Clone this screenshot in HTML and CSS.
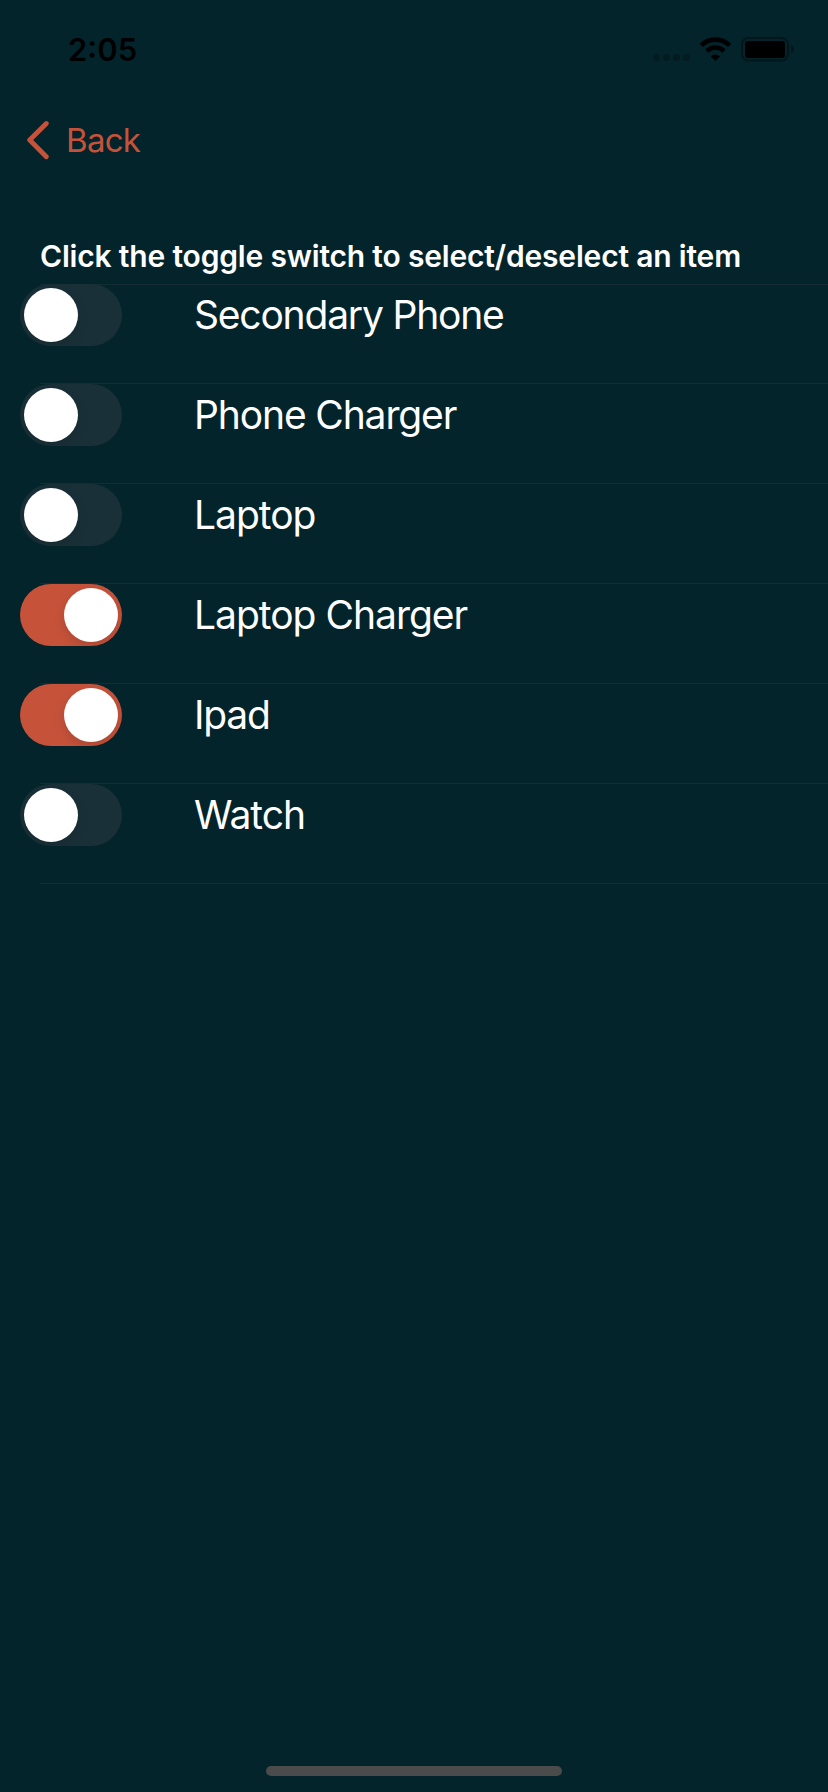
FILE: index.html
```html
<!DOCTYPE html>
<html lang="en">
<head>
<meta charset="utf-8">
<title>Select items</title>
<link rel="stylesheet" href="styles.css">
</head>
<body>
<div class="screen">
  <header class="status">
    <span class="time">2:05</span>
    <svg class="indicators" width="144" height="30" viewBox="651 34 144 30">
      <g class="signal"><circle cx="656.5" cy="57.5" r="3.5"/><circle cx="666.5" cy="57.5" r="3.5"/><circle cx="676.5" cy="57.5" r="3.5"/><circle cx="686.5" cy="57.5" r="3.5"/></g>
      <g class="wifi">
        <path d="M701.2 45.4a20.3 20.3 0 0 1 28.4 0"/>
        <path d="M706.7 51.1a12.4 12.4 0 0 1 17.4 0"/>
        <path class="wifi-dot" d="M710.8 56.4a6.6 6.6 0 0 1 9.2 0l-4.6 4.6z"/>
      </g>
      <rect class="battery-case" x="742" y="38" width="46" height="22.6" rx="6.5"/>
      <rect x="745" y="41" width="40" height="17" rx="3.2"/>
      <path class="battery-tip" d="M791 45.3q3 1 3 4t-3 4z"/>
    </svg>
  </header>
  <nav class="nav">
    <svg class="chevron" width="24" height="40" viewBox="0 0 24 40"><path d="M20.3 3.5 3.7 20l16.6 16.8"/></svg>
    <span class="back">Back</span>
  </nav>
  <h1 class="heading">Click the toggle switch to select/deselect an item</h1>
  <ul class="list">
    <li class="row"><span class="toggle"><i class="knob"></i></span><span class="label secondary">Secondary Phone</span></li>
    <li class="row"><span class="toggle"><i class="knob"></i></span><span class="label charger">Phone Charger</span></li>
    <li class="row"><span class="toggle"><i class="knob"></i></span><span class="label laptop">Laptop</span></li>
    <li class="row"><span class="toggle on"><i class="knob"></i></span><span class="label laptop-charger">Laptop Charger</span></li>
    <li class="row"><span class="toggle on"><i class="knob"></i></span><span class="label ipad">Ipad</span></li>
    <li class="row"><span class="toggle"><i class="knob"></i></span><span class="label watch">Watch</span></li>
  </ul>
  <div class="home"></div>
</div>
</body>
</html>
```
FILE: styles.css
```css
* { box-sizing: border-box; margin: 0; padding: 0; }
body { background: #03242b; font-family: Inter, "Liberation Sans", sans-serif; }
.screen { display: flex; flex-direction: column; width: 828px; height: 1792px; overflow: hidden; }
.status { display: flex; justify-content: space-between; height: 96px; padding: 30px 33px 0 68px; }
.time { font-size: 31px; font-weight: 600; line-height: 40px; color: #000; white-space: nowrap; }
.indicators { margin-top: 4px; }
.signal { fill: #021c21; }
.wifi path { fill: none; stroke: #000; stroke-width: 4.6; }
.wifi .wifi-dot { fill: #000; stroke: none; }
.battery-case { fill: none; stroke: #02171b; stroke-width: 2; }
.battery-tip { fill: #02171b; }
.nav { display: flex; align-items: center; gap: 16px; height: 88px; padding-left: 26px; color: #c7523a; }
.chevron { fill: none; stroke: #c7523a; stroke-width: 4.8; stroke-linecap: round; stroke-linejoin: round; }
.back { font-size: 33px; line-height: 40px; letter-spacing: -.7px; white-space: nowrap; }
.heading { height: 100px; padding: 52px 0 0 40px; font-size: 30px; font-weight: 600; line-height: 40px; letter-spacing: -.18px; color: #fff; white-space: nowrap; }
.list { list-style: none; }
.row { display: flex; align-items: flex-start; height: 100px; padding-left: 20px; background: linear-gradient(#142c33, #142c33) 40px 99px / 788px 1px no-repeat; }
.row:first-child { background-image: linear-gradient(#142c33, #142c33), linear-gradient(#142c33, #142c33); background-position: 40px 99px, 40px 0; background-size: 788px 1px, 788px 1px; background-repeat: no-repeat; }
.toggle { display: flex; flex: none; width: 102px; height: 62px; padding: 4px; border-radius: 31px; background: #1a3038; overflow: hidden; }
.toggle.on { justify-content: flex-end; background: #c7523a; }
.knob { width: 54px; height: 54px; border-radius: 50%; background: #fff; box-shadow: 0 4px 12px rgba(0, 0, 0, .14); }
.label { margin: 6px 0 0 72px; font-size: 39px; line-height: 50px; letter-spacing: -1px; color: #fff; white-space: nowrap; }
.secondary { letter-spacing: -1.2px; }
.charger { letter-spacing: -1.13px; }
.ipad { letter-spacing: -1.2px; }
.home { width: 296px; height: 10px; margin: auto auto 16px; border-radius: 5px; background: #4b4b4b; }
```
